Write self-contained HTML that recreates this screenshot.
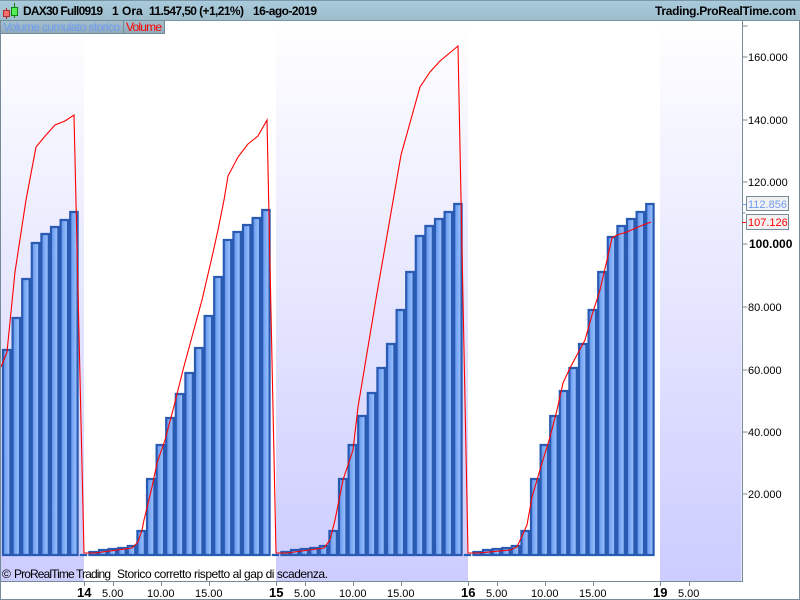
<!DOCTYPE html>
<html><head><meta charset="utf-8"><style>
html,body{margin:0;padding:0;width:800px;height:600px;overflow:hidden;background:#fff}
svg{display:block}
text{font-family:"Liberation Sans",sans-serif;font-size:11px;fill:#000}
.b{font-weight:bold}
</style></head><body>
<svg width="800" height="600" viewBox="0 0 800 600" xmlns="http://www.w3.org/2000/svg">
<defs>
<linearGradient id="h" x1="0" y1="0" x2="0" y2="1"><stop offset="0" stop-color="#a9cbdb"/><stop offset="1" stop-color="#9dbccb"/></linearGradient>
<linearGradient id="v" x1="0" y1="21" x2="0" y2="581" gradientUnits="userSpaceOnUse"><stop offset="0" stop-color="#ffffff"/><stop offset="1" stop-color="#ccccff"/></linearGradient>
<linearGradient id="bar" x1="4" y1="0" x2="13.6" y2="0" gradientUnits="userSpaceOnUse" spreadMethod="repeat"><stop offset="0" stop-color="#6a9cf0"/><stop offset=".55" stop-color="#99bffc"/><stop offset="1" stop-color="#99bffc"/></linearGradient>
<linearGradient id="tab" x1="0" y1="0" x2="0" y2="1"><stop offset="0" stop-color="#a5c2d1"/><stop offset="1" stop-color="#90a9b8"/></linearGradient>
</defs>
<rect x="0" y="0" width="800" height="600" fill="#fff"/>
<rect x="1" y="21" width="83" height="560" fill="url(#v)"/>
<rect x="276" y="21" width="192" height="560" fill="url(#v)"/>
<rect x="660" y="21" width="81.5" height="560" fill="url(#v)"/>
<!-- header -->
<rect x="0" y="0" width="800" height="21" fill="url(#h)"/>
<rect x="0" y="0" width="800" height="1" fill="#7a98a8"/>
<rect x="0" y="20" width="800" height="1" fill="#7c929f"/>
<path d="M6.500 8V11M6.500 17V19" stroke="#a02020" fill="none"/>
<rect x="3.500" y="10.500" width="6" height="6" fill="#f27070" stroke="#b03030"/>
<path d="M14.500 3V7M14.500 15V18" stroke="#108010" fill="none"/>
<rect x="11.500" y="7.500" width="6" height="8" fill="#55ee55" stroke="#108010"/>
<text class="b" x="23" y="15" style="font-size:12px" textLength="80">DAX30 Full0919</text>
<text class="b" x="112" y="15" style="font-size:12px">1 Ora</text>
<text class="b" x="149" y="15" style="font-size:12px" textLength="95">11.547,50 (+1,21%)</text>
<text class="b" x="253" y="15" style="font-size:12px" textLength="64">16-ago-2019</text>
<text class="b" x="655" y="15" style="font-size:12px" textLength="141">Trading.ProRealTime.com</text>
<!-- tabs -->
<rect x="0.500" y="20.500" width="123" height="13" fill="url(#tab)" stroke="#768b98"/>
<rect x="123.500" y="20.500" width="41" height="13" fill="url(#tab)" stroke="#768b98"/>
<text x="3" y="31" style="font-size:12px;fill:#6f9cf0" textLength="117">Volume cumulato storico</text>
<text x="126" y="31" style="font-size:12px;fill:#ff0000" textLength="36">Volume</text>
<!-- bars -->
<path fill="url(#bar)" stroke="#2a5bb2" stroke-width="2.200" d="
M3 350h7.400V555H3z M12.600 318h7.400V555h-7.400z M22.200 279h7.400V555h-7.400z M31.800 243h7.400V555h-7.400z M41.400 234h7.400V555h-7.400z M51 227h7.400V555H51z M60.600 220h7.400V555h-7.400z M70.200 212h7.400V555h-7.400z
M79.800 555h7.400V555h-7.400z M89.400 552h7.400V555h-7.400z M99 550h7.400V555H99z M108.600 549h7.400V555h-7.400z M118.200 548h7.400V555h-7.400z M127.800 546h7.400V555h-7.400z M137.400 531h7.400V555h-7.400z
M147 479h7.400V555H147z M156.600 445h7.400V555h-7.400z M166.200 418h7.400V555h-7.400z M175.800 394h7.400V555h-7.400z M185.400 373h7.400V555h-7.400z M195 348h7.400V555H195z M204.600 316h7.400V555h-7.400z M214.200 277h7.400V555h-7.400z M223.800 240h7.400V555h-7.400z M233.400 232h7.400V555h-7.400z M243 225h7.400V555H243z M252.600 218h7.400V555h-7.400z M262.200 210h7.400V555h-7.400z
M271.800 555h7.400V555h-7.400z M281.400 552h7.400V555h-7.400z M291 550h7.400V555H291z M300.600 549h7.400V555h-7.400z M310.200 548h7.400V555h-7.400z M319.800 546h7.400V555h-7.400z M329.400 531h7.400V555h-7.400z
M339 479h7.400V555H339z M348.600 445h7.400V555h-7.400z M358.200 416h7.400V555h-7.400z M367.800 393h7.400V555h-7.400z M377.400 368h7.400V555h-7.400z M387 344h7.400V555H387z M396.600 310h7.400V555h-7.400z M406.200 272h7.400V555h-7.400z M415.800 236h7.400V555h-7.400z M425.400 226h7.400V555h-7.400z M435 219h7.400V555H435z M444.600 212h7.400V555h-7.400z M454.200 204h7.400V555h-7.400z
M463.800 555h7.400V555h-7.400z M473.400 552h7.400V555h-7.400z M483 550h7.400V555H483z M492.600 549h7.400V555h-7.400z M502.200 548h7.400V555h-7.400z M511.800 546h7.400V555h-7.400z M521.400 531h7.400V555h-7.400z
M531 479h7.400V555H531z M540.600 445h7.400V555h-7.400z M550.200 416h7.400V555h-7.400z M559.800 391h7.400V555h-7.400z M569.400 368h7.400V555h-7.400z M579 344h7.400V555H579z M588.600 310h7.400V555h-7.400z M598.200 272h7.400V555h-7.400z M607.800 237h7.400V555h-7.400z M617.400 226h7.400V555h-7.400z M627 219h7.400V555H627z M636.600 212h7.400V555h-7.400z M646.200 204h7.400V555h-7.400z"/>
<!-- red line -->
<polyline fill="none" stroke="#ff0000" stroke-width="1.100" points="1,367 7,352 15,272 26,200 36,147 46,135 55,125 65,121 74,115 84,553 95,553 132,548 138,542 142,530 144,520 152,487 157,463 165,440 173,410 183,370 193,333 202,300 212,257 218,230 224,200 228,176 238,157 248,144 258,136 267,120 276,553 287,553 324,548 330,540 335,520 343,480 353,450 358,407 368,347 377,293 388,230 401,155 420,87 430,72 440,61 458,46 468,553 479,553 510,550 517,547 527,525 532,497 542,463 550,437 557,410 563,383 570,368 578,353 585,340 592,315 600,290 607,260 612,238 617,235 627,232 638,227 651,222"/>
<!-- axes -->
<path fill="none" stroke="#768b98" d="M742.500 21V581.500H0M0.500 21V599.500H799.500V21"/>
<path fill="none" stroke="#768b98" d="M742.500 26h5M742.500 57h5M742.500 120h5M742.500 182h5M742.500 244h5M742.500 307h5M742.500 370h5M742.500 432h5M742.500 494h5M742.500 213h3M84.500 581v5M113.500 581v5M161.500 581v5M209.500 581v5M276.500 581v5M305.500 581v5M353.500 581v5M401.500 581v5M468.500 581v5M497.500 581v5M545.500 581v5M593.500 581v5M660.500 581v5M689.500 581v5"/>
<text x="748" y="61">160.000</text>
<text x="748" y="124">140.000</text>
<text x="748" y="186">120.000</text>
<text x="748" y="311">80.000</text>
<text x="748" y="374">60.000</text>
<text x="748" y="436">40.000</text>
<text x="748" y="498">20.000</text>
<text class="b" x="749" y="248" style="font-size:12px">100.000</text>
<path stroke="#6f9cf0" d="M742 204.500h4" fill="none"/>
<path stroke="#ff0000" d="M742 222.500h4" fill="none"/>
<rect x="746.500" y="196.500" width="42" height="14" fill="#f2f2f2" stroke="#768b98"/>
<text x="748" y="208" style="fill:#6f9cf0">112.856</text>
<rect x="746.500" y="214.500" width="42" height="15" fill="#f2f2f2" stroke="#768b98"/>
<text x="748" y="226" style="fill:#ff0000">107.126</text>
<!-- footer note -->
<text x="2" y="578" style="font-size:12px">©</text>
<text x="14" y="578" style="font-size:12px" textLength="97">ProRealTime Trading</text>
<text x="117" y="578" style="font-size:12px" textLength="211">Storico corretto rispetto al gap di scadenza.</text>
<!-- x labels -->
<text x="77" y="597" style="font-weight:bold;font-size:13px">14</text>
<text x="269" y="597" style="font-weight:bold;font-size:13px">15</text>
<text x="461" y="597" style="font-weight:bold;font-size:13px">16</text>
<text x="653" y="597" style="font-weight:bold;font-size:13px">19</text>
<text x="102" y="597">5.00</text>
<text x="147" y="597">10.00</text>
<text x="195" y="597">15.00</text>
<text x="294" y="597">5.00</text>
<text x="339" y="597">10.00</text>
<text x="387" y="597">15.00</text>
<text x="486" y="597">5.00</text>
<text x="531" y="597">10.00</text>
<text x="579" y="597">15.00</text>
<text x="678" y="597">5.00</text>
</svg>
</body></html>
